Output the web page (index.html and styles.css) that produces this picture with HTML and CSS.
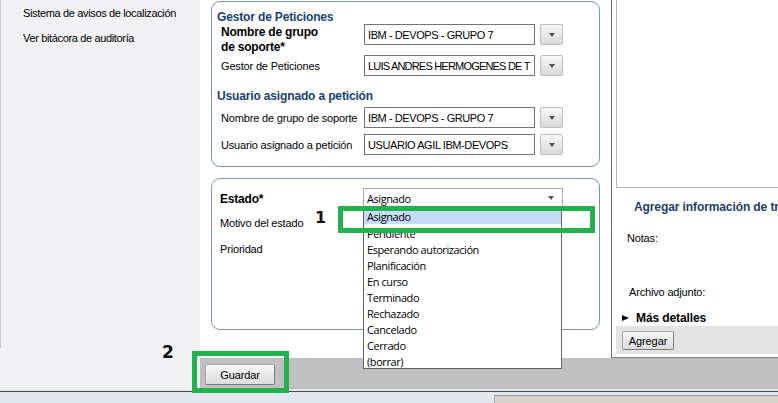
FILE: index.html
```html
<!DOCTYPE html>
<html lang="es">
<head>
<meta charset="utf-8">
<title>Gestor de Peticiones</title>
<link rel="stylesheet" href="styles.css">
</head>
<body>
<div class="page">
  <div class="main">
    <aside class="sidebar">
      <div class="sidebar-inner">
        <span class="nav-item">Sistema de avisos de localización</span>
        <span class="nav-item">Ver bitácora de auditoría</span>
      </div>
    </aside>
    <div class="content">
      <div class="content-top">
        <div class="form">
          <div class="group g1">
            <div class="group-title">Gestor de Peticiones</div>
            <div class="row row-tall">
              <div class="label label-bold">Nombre de grupo<br>de soporte*</div>
              <div class="select"><span class="select-text">IBM - DEVOPS - GRUPO 7</span></div>
              <div class="dd-btn"><span class="tri"></span></div>
            </div>
            <div class="row">
              <div class="label">Gestor de Peticiones</div>
              <div class="select"><span class="select-text select-tight">LUIS ANDRES HERMOGENES DE T</span></div>
              <div class="dd-btn"><span class="tri"></span></div>
            </div>
            <div class="group-title title-2">Usuario asignado a petición</div>
            <div class="row">
              <div class="label">Nombre de grupo de soporte</div>
              <div class="select"><span class="select-text">IBM - DEVOPS - GRUPO 7</span></div>
              <div class="dd-btn"><span class="tri"></span></div>
            </div>
            <div class="row row-gap">
              <div class="label">Usuario asignado a petición</div>
              <div class="select"><span class="select-text">USUARIO AGIL IBM-DEVOPS</span></div>
              <div class="dd-btn"><span class="tri"></span></div>
            </div>
          </div>
          <div class="group g2">
            <div class="row2 row-estado">
              <div class="label label-bold label-estado">Estado*</div>
              <div class="estado-select">
                <span class="estado-text">Asignado</span>
                <span class="tri tri-small"></span>
                <ul class="dd-list">
                  <li class="dd-item selected">Asignado</li>
                  <li class="dd-item">Pendiente</li>
                  <li class="dd-item">Esperando autorización</li>
                  <li class="dd-item">Planificación</li>
                  <li class="dd-item">En curso</li>
                  <li class="dd-item">Terminado</li>
                  <li class="dd-item">Rechazado</li>
                  <li class="dd-item">Cancelado</li>
                  <li class="dd-item">Cerrado</li>
                  <li class="dd-item">(borrar)</li>
                </ul>
              </div>
            </div>
            <div class="row2 row-plain first-plain"><div class="label">Motivo del estado</div></div>
            <div class="row2 row-plain"><div class="label">Prioridad</div></div>
          </div>
        </div>
        <div class="side-panel">
          <div class="preview"></div>
          <div class="work-title">Agregar información de trabajo</div>
          <div class="notas">Notas:</div>
          <div class="archivo">Archivo adjunto:</div>
          <div class="more"><span class="tri-right"></span><span class="more-text">Más detalles</span></div>
          <div class="add-bar"><button class="btn btn-add">Agregar</button></div>
        </div>
      </div>
      <div class="save-bar"><button class="btn btn-save">Guardar</button></div>
    </div>
  </div>
  <div class="bottom"><div class="bottom-inner"><div class="bottom-box"></div></div></div>

  <div class="mark mark-1"></div>
  <div class="num num-1">1</div>
  <div class="mark mark-2"></div>
  <div class="num num-2">2</div>
</div>
</body>
</html>
```

FILE: styles.css
```css
* { box-sizing: border-box; }
html, body { margin: 0; padding: 0; }
body {
  width: 778px;
  height: 403px;
  overflow: hidden;
  font-family: "Liberation Sans", Arial, sans-serif;
  font-size: 11px;
  color: #000;
  background: #fff;
}
.page {
  position: relative;
  width: 778px;
  height: 403px;
  overflow: hidden;
  display: flex;
  flex-direction: column;
}
.main { display: flex; height: 389px; flex: none; }

/* sidebar */
.sidebar { width: 200px; flex: none; background: #f1f1f3; }
.sidebar-inner {
  height: 348px;
  border-left: 1px solid #c2cddb;
  padding: 1px 0 0 22px;
}
.nav-item {
  display: block;
  line-height: 25px;
  letter-spacing: -0.35px;
  white-space: nowrap;
}

/* content */
.content { flex: 1; display: flex; flex-direction: column; min-width: 0; }
.content-top { height: 358px; flex: none; display: flex; }
.form { width: 411px; flex: none; background: #fff; padding: 1px 0 0 11px; }

.group { width: 389px; border: 1px solid #7693b0; border-radius: 9px; }
.g1 { height: 166px; padding: 8px 0 0 5px; }
.g2 { height: 152px; margin-top: 11px; padding: 9px 0 0 8px; }

.group-title {
  font-weight: bold;
  font-size: 12px;
  line-height: 14px;
  color: #17416e;
  letter-spacing: -0.15px;
  white-space: nowrap;
}
.title-2 { margin-top: 13px; margin-bottom: 4px; }

.row { display: flex; align-items: center; height: 21px; padding-left: 4px; }
.row-tall { height: 31px; align-items: flex-start; }
.row-tall .label { padding-top: 1px; line-height: 15px; }
.row-gap { margin-top: 6px; }

.label { width: 143px; flex: none; letter-spacing: -0.17px; white-space: nowrap; }
.label-bold { font-weight: bold; font-size: 12px; letter-spacing: -0.2px; }
.label-estado { padding-top: 3px; }

.select {
  width: 171px;
  height: 21px;
  flex: none;
  border: 1px solid #747474;
  background: #fff;
  padding: 0 0 0 3px;
  display: flex;
  align-items: center;
  overflow: hidden;
}
.select-text { white-space: nowrap; letter-spacing: -0.42px; }
.select-text.select-tight { letter-spacing: -0.8px; }

.dd-btn {
  width: 23px;
  height: 21px;
  flex: none;
  margin-left: 5px;
  border: 1px solid #bcbcbc;
  border-radius: 2px;
  background: linear-gradient(#f7f7f7, #dadada);
  display: flex;
  align-items: center;
  justify-content: center;
}
.tri {
  width: 0;
  height: 0;
  border-left: 3.5px solid transparent;
  border-right: 3.5px solid transparent;
  border-top: 4px solid #505050;
}
.tri-small { border-top-color: #555; margin-right: 8px; }

/* estado block */
.row2 { display: flex; align-items: center; }
.row-estado { height: 19px; }
.row-plain { height: 26px; }
.first-plain { margin-top: 3px; }

.estado-select {
  position: relative;
  width: 200px;
  height: 19px;
  flex: none;
  border: 1px solid #a7abb0;
  background: #fff;
  display: flex;
  align-items: center;
  justify-content: space-between;
  padding-left: 3px;
  font-family: "Open Sans", "Noto Sans", sans-serif;
  font-size: 11px;
  letter-spacing: -0.42px;
}
.estado-text { padding-top: 2px; }
.dd-list {
  position: absolute;
  top: 18px;
  left: -1px;
  width: 199px;
  margin: 0;
  padding: 0;
  list-style: none;
  background: #fff;
  border: 1px solid #646464;
  z-index: 2;
}
.dd-item {
  height: 16px;
  line-height: 19px;
  padding-left: 3px;
  white-space: nowrap;
}
.dd-item.selected { background: #c6dcf5; line-height: 18px; }

/* side panel */
.side-panel {
  flex: 1;
  min-width: 0;
  overflow: hidden;
  border-left: 1px solid #6b6b6b;
  border-bottom: 1px solid #7b7b7b;
  background: #fff;
  display: flex;
  flex-direction: column;
}
.preview {
  height: 188px;
  flex: none;
  margin-left: 4px;
  border-left: 1px solid #b5b5b5;
  border-bottom: 1px solid #b5b5b5;
}
.work-title {
  margin-top: 12px;
  padding-left: 22px;
  font-weight: bold;
  font-size: 12px;
  line-height: 14px;
  color: #1c3d66;
  white-space: nowrap;
  letter-spacing: -0.1px;
}
.notas { margin-top: 17px; padding-left: 15px; line-height: 14px; letter-spacing: -0.17px; }
.archivo { margin-top: 40px; padding-left: 17px; line-height: 14px; letter-spacing: -0.17px; }
.more {
  margin-top: 12px;
  padding-left: 10px;
  height: 14px;
  display: flex;
  align-items: center;
}
.tri-right {
  width: 0;
  height: 0;
  border-top: 3.5px solid transparent;
  border-bottom: 3.5px solid transparent;
  border-left: 7px solid #000;
}
.more-text { margin-left: 7px; font-weight: bold; font-size: 12px; letter-spacing: -0.1px; }
.add-bar {
  margin-top: 1px;
  margin-left: 4px;
  height: 28px;
  flex: none;
  background: #e3e3e3;
  padding: 5px 0 0 6px;
}

.btn {
  font-family: "Liberation Sans", Arial, sans-serif;
  font-size: 11px;
  color: #000;
  padding: 0;
  border: 1px solid #a6a6a6;
  border-right-color: #7a7a7a;
  border-bottom-color: #7a7a7a;
  border-radius: 2px;
  background: linear-gradient(#f7f7f7, #dcdcdc);
  letter-spacing: -0.1px;
}
.btn-add { width: 52px; height: 19px; }
.save-bar { height: 31px; flex: none; background: #c0c0c0; padding: 6px 0 0 5px; }
.btn-save { width: 70px; height: 21px; }

/* bottom strip */
.bottom { height: 14px; flex: none; border-top: 2px solid #e6e6e6; }
.bottom-inner {
  height: 12px;
  border-top: 1px solid #4a4a4a;
  background: #e2e7ef;
  padding: 3px 0 0 494px;
}
.bottom-box {
  height: 8px;
  border-top: 1px solid #9a9a9a;
  border-left: 1px solid #b0b0b0;
  background: #d6d3ce;
}

/* annotations */
.mark { position: absolute; border: 5px solid #22b14c; z-index: 5; }
.mark-1 { left: 338px; top: 206px; width: 257px; height: 27px; }
.mark-2 { left: 192px; top: 351px; width: 97px; height: 42px; }
.num {
  position: absolute;
  font-family: "DejaVu Sans", sans-serif;
  font-weight: bold;
  color: #111;
  z-index: 5;
}
.num-1 { left: 315px; top: 210px; font-size: 16px; line-height: 16px; }
.num-2 { left: 162px; top: 344px; font-size: 17px; line-height: 17px; }
```
